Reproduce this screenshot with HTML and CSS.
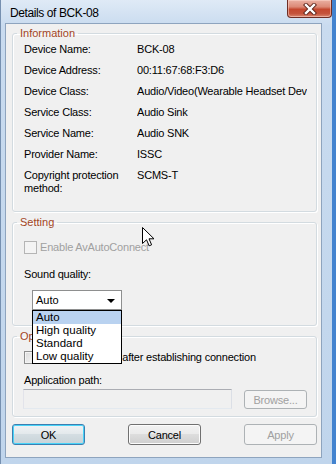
FILE: index.html
```html
<!DOCTYPE html>
<html lang="en">
<head>
  <meta charset="UTF-8">
  <title>Details of BCK-08</title>
  <link rel="stylesheet" href="styles.css">
</head>
<body>
  <div class="window">
    <!-- title bar -->
    <div class="titlebar">
      <span class="title">Details of BCK-08</span>
      <button class="close-btn" aria-label="Close">
        <svg width="16" height="12" viewBox="0 0 16 12">
          <path d="M4 2 L12 10 M12 2 L4 10" stroke="#5b2219" stroke-width="4.2" stroke-linecap="square" fill="none"/>
          <path d="M4 2 L12 10 M12 2 L4 10" stroke="#fff" stroke-width="2.4" stroke-linecap="square" fill="none"/>
        </svg>
      </button>
    </div>

    <div class="client">
      <fieldset class="group info">
        <legend>Information</legend>
        <div class="row"><span class="label">Device Name:</span><span class="value">BCK-08</span></div>
        <div class="row"><span class="label">Device Address:</span><span class="value">00:11:67:68:F3:D6</span></div>
        <div class="row"><span class="label">Device Class:</span><span class="value">Audio/Video(Wearable Headset Device)</span></div>
        <div class="row"><span class="label">Service Class:</span><span class="value">Audio Sink</span></div>
        <div class="row"><span class="label">Service Name:</span><span class="value">Audio SNK</span></div>
        <div class="row"><span class="label">Provider Name:</span><span class="value">ISSC</span></div>
        <div class="row"><span class="label">Copyright protection method:</span><span class="value">SCMS-T</span></div>
      </fieldset>

      <fieldset class="group setting">
        <legend>Setting</legend>
        <div class="check disabled"><span class="box"></span>Enable AvAutoConnect</div>
        <div class="field-label">Sound quality:</div>
        <div class="combo">
          <span>Auto</span>
          <span class="arrow"></span>
          <ul class="dropdown">
            <li class="selected">Auto</li>
            <li>High quality</li>
            <li>Standard</li>
            <li>Low quality</li>
          </ul>
        </div>
      </fieldset>

      <fieldset class="group option">
        <legend>Option</legend>
        <div class="check"><span class="box"></span>Open application after establishing connection</div>
        <div class="field-label">Application path:</div>
        <div class="path-row">
          <div class="textbox"></div>
          <button class="btn browse" disabled>Browse...</button>
        </div>
      </fieldset>

      <div class="buttons">
        <button class="btn default">OK</button>
        <button class="btn">Cancel</button>
        <button class="btn" disabled>Apply</button>
      </div>
    </div>

    <!-- mouse pointer -->
    <svg class="cursor" width="13" height="20" viewBox="0 0 13 20">
      <path d="M0.5 0.5 L0.5 16.5 L4.5 12.8 L7.2 18.8 L9.6 17.8 L7 11.8 L12 11.8 Z" fill="#fff" stroke="#000" stroke-width="1"/>
    </svg>
  </div>
</body>
</html>
```

FILE: styles.css
```css
* {
  box-sizing: border-box;
}
body {
  margin: 0;
  font-family: "Liberation Sans", Arial, sans-serif;
  font-size: 11px;
  color: #000;
}
.window {
  position: relative;
  width: 336px;
  height: 464px;
  display: flex;
  flex-direction: column;
  background: linear-gradient(#dfeaf6, #c9dbef 26px, #c0d5ec);
  border-left: 1px solid #7690b0;
  border-right: 4px solid #4383cf;
  overflow: hidden;
}
.titlebar {
  height: 23px;
  display: flex;
  align-items: flex-start;
  padding-left: 9px;
}
.title {
  padding-top: 6px;
  line-height: 14px;
  font-size: 12px;
  letter-spacing: -0.4px;
}
.close-btn {
  margin-left: auto;
  width: 45px;
  height: 18px;
  padding: 0;
  border: 1px solid #6e2e25;
  border-top: none;
  border-radius: 0 0 4px 4px;
  background: linear-gradient(#eab0a2, #dc8a77 40%, #c4482f 55%, #c5543c 80%, #d98770);
  display: flex;
  align-items: center;
  justify-content: center;
  box-shadow: inset 0 0 0 1px rgba(255, 220, 210, 0.5);
}

.client {
  flex: 1;
  margin: 0 10px 6px 4px;
  padding-left: 6px;
  background: #f0f0f0;
  border: 1px solid #8ea4be;
}

.group {
  width: 305px;
  min-width: 0;
  margin: 4px 0 0;
  padding: 3px 9px 17px 11px;
  border: 1px solid #d3dbe0;
  border-radius: 3px;
  box-shadow: inset 1px 1px 0 #fff, 1px 1px 0 #fff;
}
.group legend {
  margin-left: -7px;
  padding: 0 3px;
  line-height: 13px;
  color: #a3461f;
}
.group.info {
  margin-top: 3px;
  padding-bottom: 16px;
}
.group.setting {
  padding-top: 12px;
  padding-bottom: 15px;
}
.group.option {
  padding-top: 8px;
  padding-bottom: 7px;
}

.row {
  display: flex;
  height: 21px;
  line-height: 13px;
  letter-spacing: -0.2px;
}
.row:last-child {
  height: 26px;
}
.label {
  width: 113px;
  flex-shrink: 0;
  padding-right: 12px;
}
.value {
  width: 176px;
  white-space: nowrap;
  overflow: hidden;
}

.check {
  display: flex;
  align-items: center;
  gap: 3px;
  height: 13px;
  line-height: 13px;
  letter-spacing: -0.2px;
  white-space: nowrap;
}
.check .box {
  width: 13px;
  height: 13px;
  border: 1px solid #8e8f8f;
  background: linear-gradient(135deg, #dcdcdc, #f8f8f8);
  box-shadow: inset 0 0 0 1px #f4f4f4;
}
.check.disabled {
  color: #a0a0a0;
}
.check.disabled .box {
  border-color: #b5b5b5;
  background: #f4f4f4;
}
.field-label {
  margin-top: 14px;
  line-height: 13px;
  letter-spacing: -0.2px;
}
.option .field-label {
  margin-top: 10px;
}

.combo {
  position: relative;
  margin: 9px 0 0 8px;
  width: 90px;
  height: 20px;
  padding-left: 3px;
  border: 1px solid #8e8f8f;
  background: #fff;
  display: flex;
  align-items: center;
  line-height: 13px;
}
.combo .arrow {
  position: absolute;
  right: 6px;
  top: 8px;
  border-left: 4px solid transparent;
  border-right: 4px solid transparent;
  border-top: 4px solid #000;
}
.dropdown {
  position: absolute;
  left: -1px;
  top: 19px;
  z-index: 10;
  width: 90px;
  margin: 0;
  padding: 0;
  list-style: none;
  background: #fff;
  border: 1px solid #000;
}
.dropdown li {
  height: 13px;
  line-height: 13px;
  padding-left: 3px;
  font-size: 11.5px;
}
.dropdown li.selected {
  background: #b9d2f0;
}

.path-row {
  display: flex;
  align-items: flex-start;
  margin-top: 2px;
}
.textbox {
  width: 209px;
  height: 20px;
  margin-left: -1px;
  border: 1px solid #abadb3;
  border-color: #abadb3 #dbdfe6 #e3e9ef #e2e3ea;
  background: #f0f0f0;
}

.btn {
  width: 73px;
  height: 21px;
  padding: 0;
  font-family: "Liberation Sans", Arial, sans-serif;
  font-size: 11px;
  letter-spacing: -0.2px;
  color: #000;
  border: 1px solid #707070;
  border-radius: 3px;
  background: linear-gradient(#f2f2f2, #ebebeb 45%, #dddddd 50%, #cfcfcf);
  box-shadow: inset 0 0 0 1px #fcfcfc;
}
.btn.default {
  border-color: #3c7fb1;
  box-shadow: inset 0 0 0 1px #48d3f8;
  background: linear-gradient(#f0f3f5, #e4e9ec 45%, #d4dde2 50%, #c8d3d8);
}
.btn:disabled {
  color: #a0a0a0;
  border-color: #adb2b5;
  background: #f4f4f4;
  box-shadow: none;
}
.btn.browse {
  width: 63px;
  height: 19px;
  margin-left: auto;
  margin-top: 1px;
}
.buttons {
  width: 305px;
  margin-top: 7px;
  display: flex;
  justify-content: space-between;
}

.cursor {
  position: absolute;
  left: 141px;
  top: 227px;
}
```
